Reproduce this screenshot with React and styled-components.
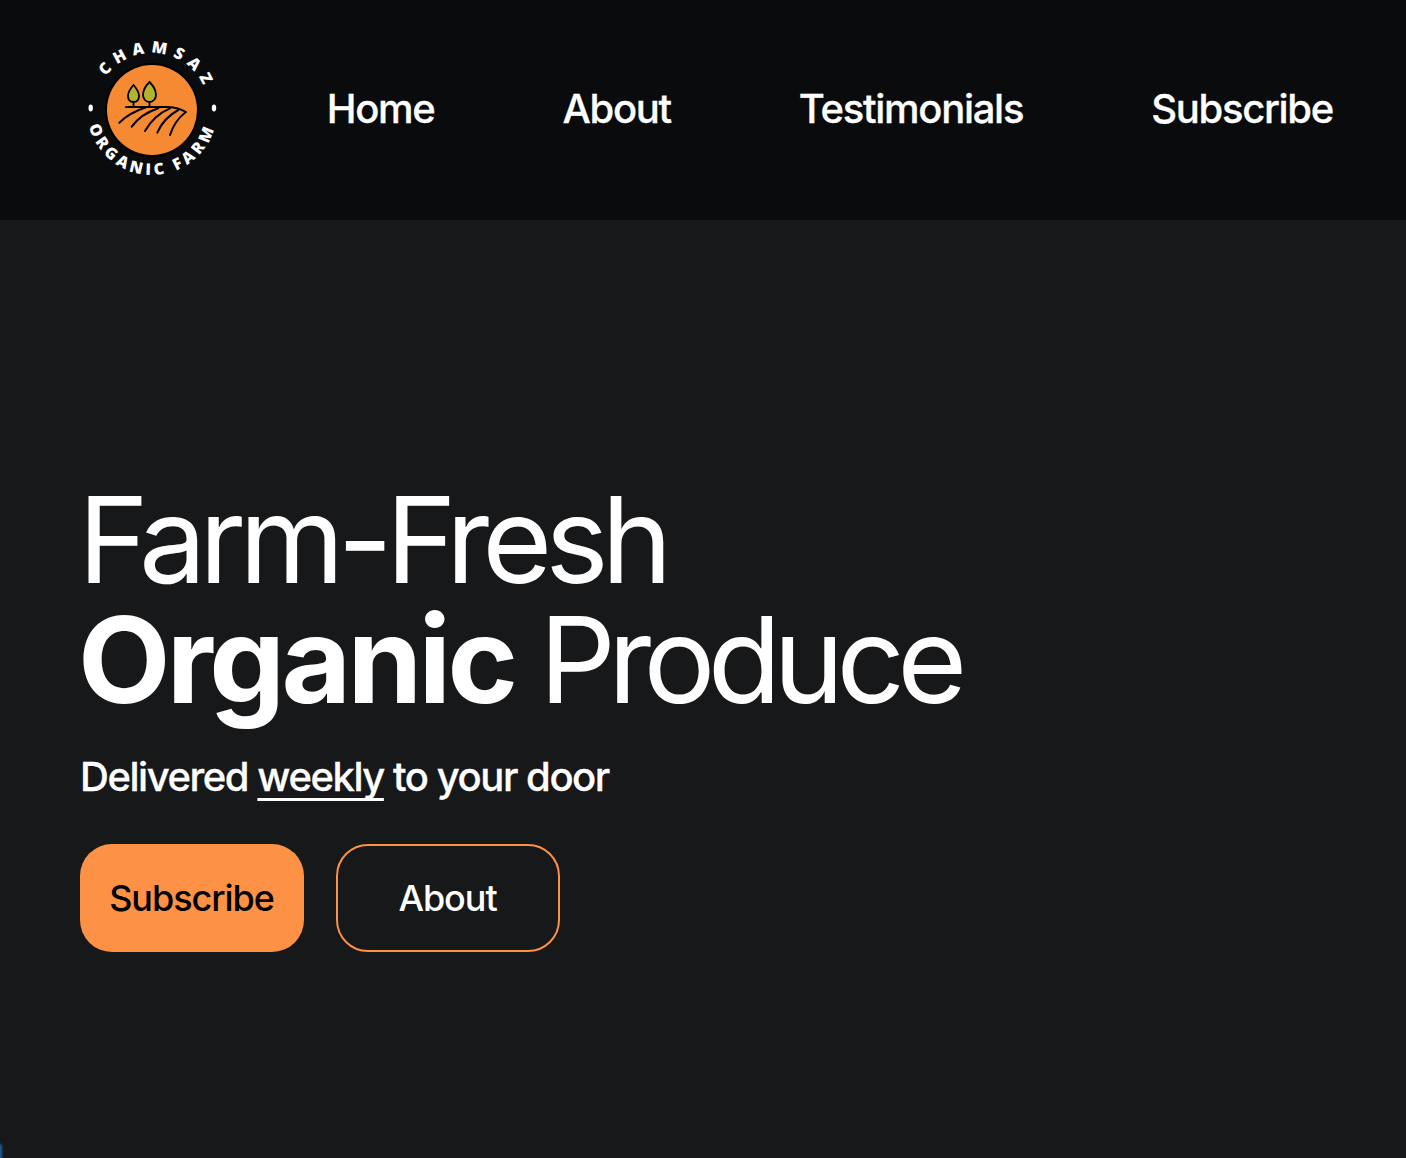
import React from "react";
import styled, { createGlobalStyle } from "styled-components";

const GlobalStyle = createGlobalStyle`
  html, body {
    margin: 0;
    padding: 0;
    height: 100%;
    background: #17181a;
  }
  body {
    font-family: Inter, "Liberation Sans", sans-serif;
    color: #fff;
    overflow: hidden;
  }
`;

const Page = styled.div`
  height: 1158px;
  display: flex;
  flex-direction: column;
  position: relative;
  overflow: hidden;
  background: #17181a;
`;

const Header = styled.header`
  height: 220px;
  flex: none;
  background: #0a0b0d;
  display: flex;
  align-items: center;
  justify-content: space-between;
  padding: 0 73px 0 80px;
  box-sizing: border-box;
`;

const Nav = styled.nav`
  display: flex;
  gap: 128px;
  padding-bottom: 2px;
`;

const NavLink = styled.a`
  color: #fff;
  font-size: 40px;
  font-weight: 500;
  letter-spacing: -1.3px;
  line-height: 48px;
  -webkit-text-stroke: 0.3px #fff;
`;

const Hero = styled.main`
  flex: 1;
  display: flex;
  flex-direction: column;
  padding: 260px 80px 0;
`;

const Title = styled.h1`
  margin: 0 0 0 -2px;
  font-size: 120px;
  line-height: 120px;
  font-weight: 400;
  letter-spacing: -7px;
  word-spacing: -2px;

  strong {
    font-weight: 700;
    letter-spacing: -3.6px;
  }
`;

const TitleEnd = styled.span`
  letter-spacing: -7.8px;
`;

const Tagline = styled.p`
  margin: 27px 0 0;
  font-size: 40px;
  line-height: 60px;
  font-weight: 500;
  letter-spacing: -1.45px;
  -webkit-text-stroke: 0.3px #fff;

  u {
    text-decoration: underline;
    text-decoration-thickness: 3px;
    text-decoration-skip-ink: none;
    text-underline-offset: 7px;
  }
`;

const Actions = styled.div`
  display: flex;
  gap: 32px;
  margin-top: 37px;
`;

const Button = styled.button`
  width: 224px;
  height: 108px;
  padding: 0 1px 0 0;
  border-radius: 32px;
  box-sizing: border-box;
  font-family: inherit;
  font-size: 36px;
  font-weight: 500;
  letter-spacing: -1.05px;
  background: ${(p) => (p.$primary ? "#fd9145" : "transparent")};
  color: ${(p) => (p.$primary ? "#000" : "#fff")};
  border: ${(p) => (p.$primary ? "none" : "2px solid #fd9145")};
`;

const CornerGlow = styled.div`
  position: absolute;
  left: -2px;
  bottom: -2px;
  width: 4px;
  height: 16px;
  border-radius: 2px;
  background: #1d5f9e;
  filter: blur(1px);
`;

const LogoText = styled.text`
  font-family: "Open Sans", Inter, sans-serif;
  font-weight: 800;
  font-size: 16px;
  fill: #fff;
`;

const Logo = () => (
  <svg width="144" height="144" viewBox="0 0 144 144">
    <defs>
      <path id="logo-top" d="M15 72 A57 57 0 0 1 129 72" />
      <path id="logo-bottom" d="M7 72 A65 65 0 0 0 137 72" />
    </defs>
    <circle cx="72" cy="72" r="47" fill="#000" />
    <circle cx="72" cy="72" r="45" fill="#f58a33" />
    <LogoText letterSpacing="6.2" transform="rotate(8 72 72)">
      <textPath href="#logo-top" startOffset="50%" textAnchor="middle">CHAMSAZ</textPath>
    </LogoText>
    <LogoText letterSpacing="3.7">
      <textPath href="#logo-bottom" startOffset="50%" textAnchor="middle">ORGANIC FARM</textPath>
    </LogoText>
    <ellipse cx="10.7" cy="70" rx="2.2" ry="3.4" fill="#fff" />
    <ellipse cx="134" cy="70" rx="2.2" ry="3.4" fill="#fff" />
    {/* trees */}
    <path d="M53.5 47 C50 51 48 55 48 58 C48 62 50.5 64 53.5 64 C56.5 64 59 62 59 58 C59 55 57 51 53.5 47 Z" fill="#b2b42c" stroke="#000" strokeWidth="1.8" />
    <path d="M69.5 44 C65.5 48 63 53 63 57 C63 61 66 64 69.5 64 C73 64 76 61 76 57 C76 53 73.5 48 69.5 44 Z" fill="#b2b42c" stroke="#000" strokeWidth="1.8" />
    <path d="M53.5 64 V69 M69.5 64 V69" stroke="#000" strokeWidth="1.8" fill="none" />
    {/* field */}
    <path d="M46 69 H86 C95 69 101 71 106 74" stroke="#000" strokeWidth="2" fill="none" strokeLinecap="round" />
    <path d="M39.3 84.7 C46 78 55 73 66 69.3 M51.7 88.7 C58 80 67 74 78.3 70.3 M65 93 C70 84 79 75 90 70.3 M77.3 94.7 C81 86 89 77 98.3 72 M90 97 C93 88 98 80 105 74.7" stroke="#000" strokeWidth="2" fill="none" strokeLinecap="round" />
  </svg>
);

const App = () => (
  <Page>
    <GlobalStyle />
    <Header>
      <Logo />
      <Nav>
        <NavLink>Home</NavLink>
        <NavLink>About</NavLink>
        <NavLink>Testimonials</NavLink>
        <NavLink>Subscribe</NavLink>
      </Nav>
    </Header>
    <Hero>
      <Title>
        Farm-Fresh
        <br />
        <strong>Organic</strong> <TitleEnd>Produce</TitleEnd>
      </Title>
      <Tagline>
        Delivered <u>weekly</u> to your door
      </Tagline>
      <Actions>
        <Button $primary>Subscribe</Button>
        <Button>About</Button>
      </Actions>
    </Hero>
    <CornerGlow />
  </Page>
);

export default App;
